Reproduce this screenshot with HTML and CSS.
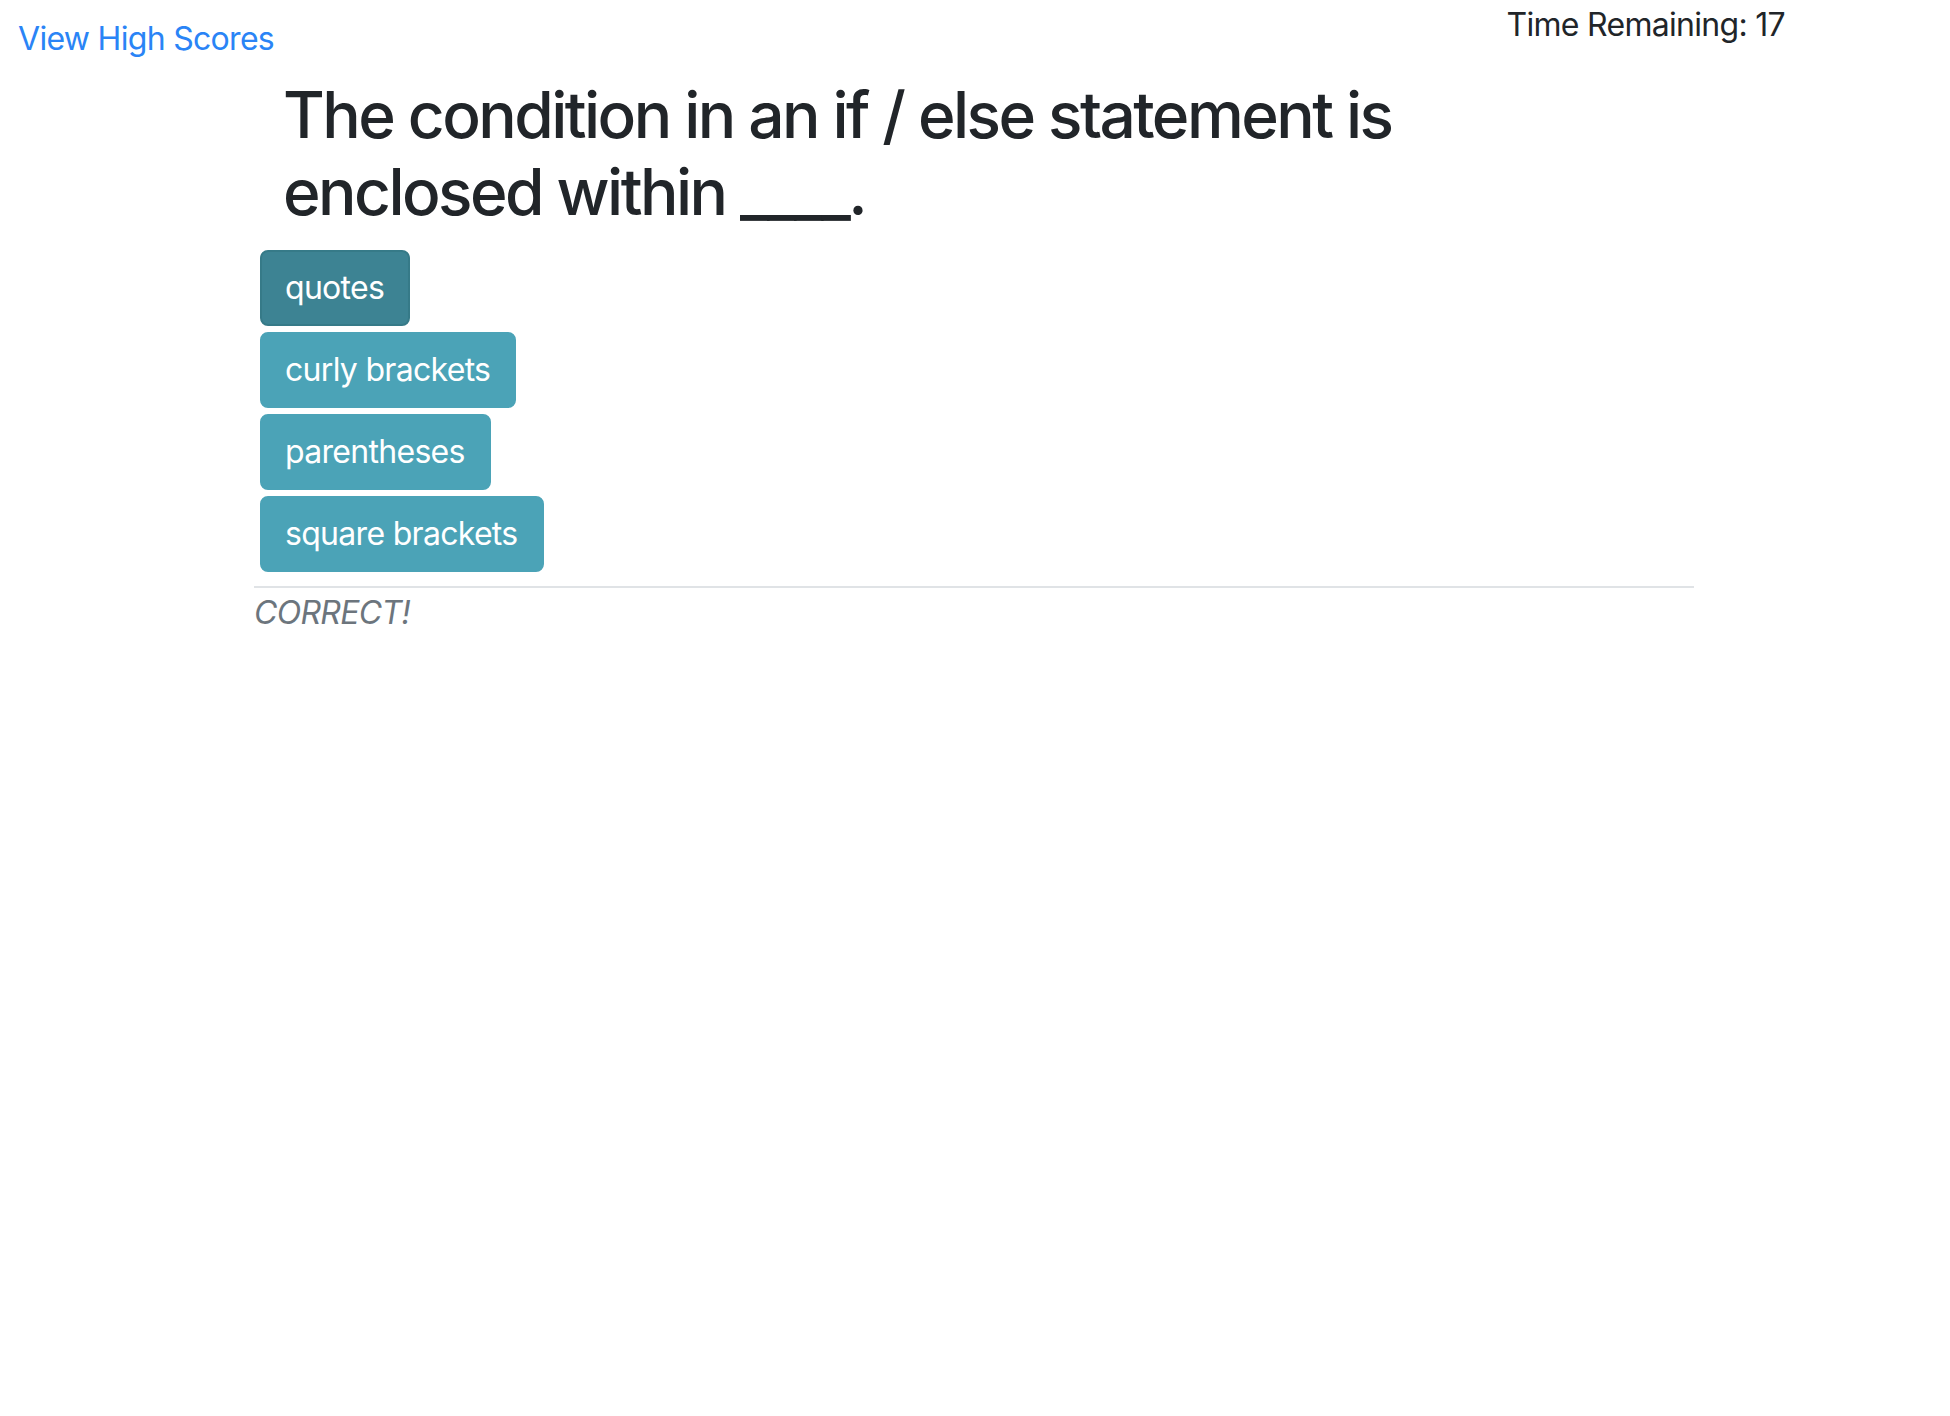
FILE: index.html
```html
<!DOCTYPE html>
<html lang="en">
<head>
<meta charset="utf-8">
<title>Code Quiz</title>
<link rel="stylesheet" href="styles.css">
</head>
<body>
<header class="topbar">
  <a class="scores-link" href="#">View High Scores</a>
  <div class="timer">Time Remaining: 17</div>
</header>
<main class="quiz">
  <h2 class="question">The condition in an if / else statement is<br>enclosed within ____.</h2>
  <div class="choices">
    <button class="choice choice-active">quotes</button>
    <button class="choice">curly brackets</button>
    <button class="choice">parentheses</button>
    <button class="choice">square brackets</button>
  </div>
  <hr class="divider">
  <p class="feedback">CORRECT!</p>
</main>
</body>
</html>
```

FILE: styles.css
```css
html, body {
  margin: 0;
  padding: 0;
  background: #ffffff;
}

body {
  font-family: Inter, "Noto Sans", "Liberation Sans", sans-serif;
  font-size: 32px;
  line-height: 48px;
  letter-spacing: -0.7px;
  color: #212529;
}

.topbar {
  display: flex;
  justify-content: space-between;
  align-items: flex-start;
  padding: 0 165px 0 18px;
  height: 62px;
}

.scores-link {
  color: #2a84f6;
  text-decoration: none;
  margin-top: 15px;
}

.timer {
  margin-top: 1px;
  color: #212529;
}

.quiz {
  width: 1440px;
  margin: 0 0 0 254px;
}

.question {
  margin: 14px 0 20px 0;
  padding-left: 29px;
  font-size: 64px;
  line-height: 77px;
  font-weight: 500;
  letter-spacing: -2.55px;
  color: #212529;
}

.choices {
  display: flex;
  flex-direction: column;
  align-items: flex-start;
  gap: 6px;
  padding-left: 6px;
}

.choice {
  font-family: inherit;
  font-size: 32px;
  line-height: 48px;
  letter-spacing: -0.7px;
  height: 76px;
  padding: 12px 24px 12px 23px;
  color: #ffffff;
  background: #4ba3b7;
  border: 2px solid #4ba3b7;
  border-radius: 8px;
  cursor: pointer;
}

.choice-active {
  background: #3d8393;
  border-color: #367a88;
}

.divider {
  margin: 14px 0 0 0;
  border: 0;
  border-top: 2px solid #e0e3e6;
  height: 0;
}

.feedback {
  margin: 1px 0 0 0;
  font-style: italic;
  color: #6c757d;
}
```
